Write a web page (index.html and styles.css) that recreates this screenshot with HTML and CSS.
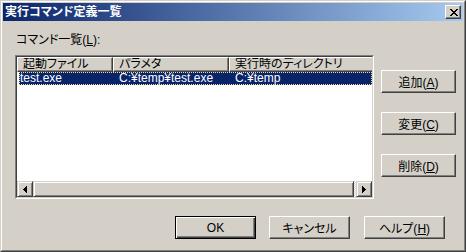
FILE: index.html
```html
<!DOCTYPE html>
<html lang="ja">
<head>
  <meta charset="UTF-8" />
  <title>実行コマンド定義一覧</title>
  <link rel="stylesheet" href="styles.css">
</head>
<body>
  <div class="window">
    <div class="frame">
      <div class="titlebar">
        <span class="title">実行コマンド定義一覧</span>
        <button class="close" type="button" title="閉じる">
          <svg width="8" height="7" viewBox="0 0 8 7" shape-rendering="crispEdges">
            <path fill="#000" d="M0 0h2v1H0zM6 0h2v1H6zM1 1h2v1H1zM5 1h2v1H5zM2 2h4v1H2zM3 3h2v1H3zM2 4h4v1H2zM1 5h2v1H1zM5 5h2v1H5zM0 6h2v1H0zM6 6h2v1H6z"/>
          </svg>
        </button>
      </div>

      <div class="body">
        <div class="main">
          <div class="list-col">
            <div class="caption">コマンド一覧(<u>L</u>):</div>
            <div class="listview">
              <div class="lv-inner">
                <div class="lv-view">
                  <div class="lv-header">
                    <div class="lv-head c1">起動ファイル</div>
                    <div class="lv-head c2">パラメタ</div>
                    <div class="lv-head c3">実行時のディレクトリ</div>
                  </div>
                  <div class="lv-row selected">
                    <span class="cell c1">test.exe</span>
                    <span class="cell c2">C:¥temp¥test.exe</span>
                    <span class="cell c3">C:¥temp</span>
                  </div>
                </div>
                <div class="hscroll">
                  <div class="sb-btn">
                    <svg width="4" height="7" viewBox="0 0 4 7" shape-rendering="crispEdges">
                      <path fill="#000" d="M3 0h1v7H3zM2 1h1v5H2zM1 2h1v3H1zM0 3h1v1H0z"/>
                    </svg>
                  </div>
                  <div class="sb-thumb"></div>
                  <div class="sb-track"></div>
                  <div class="sb-btn">
                    <svg width="4" height="7" viewBox="0 0 4 7" shape-rendering="crispEdges">
                      <path fill="#000" d="M0 0h1v7H0zM1 1h1v5H1zM2 2h1v3H2zM3 3h1v1H3z"/>
                    </svg>
                  </div>
                </div>
              </div>
            </div>
          </div>

          <div class="side">
            <button class="btn" type="button">追加(<u>A</u>)</button>
            <button class="btn" type="button">変更(<u>C</u>)</button>
            <button class="btn" type="button">削除(<u>D</u>)</button>
          </div>
        </div>

        <div class="footer">
          <button class="btn wide default" type="button">OK</button>
          <button class="btn wide" type="button">キャンセル</button>
          <button class="btn wide help" type="button">ヘルプ(<u>H</u>)</button>
        </div>
      </div>
    </div>
  </div>
</body>
</html>
```

FILE: styles.css
```css
html, body {
  margin: 0;
  padding: 0;
}
body {
  width: 466px;
  height: 252px;
  background: #d4d0c8;
  color: #000;
  font-family: "Liberation Sans", "Noto Sans CJK JP", sans-serif;
  font-size: 12px;
  font-feature-settings: "palt";
}
u {
  text-decoration: underline;
  text-underline-offset: 1px;
}

/* window frame */
.window {
  box-sizing: border-box;
  width: 466px;
  height: 252px;
  border: 1px solid;
  border-color: #d4d0c8 #404040 #404040 #d4d0c8;
}
.frame {
  box-sizing: border-box;
  height: 100%;
  border: 1px solid;
  border-color: #fff #808080 #808080 #fff;
  padding: 1px;
  display: flex;
  flex-direction: column;
}
.titlebar {
  height: 18px;
  display: flex;
  align-items: center;
  justify-content: space-between;
  padding: 0 2px;
  background: linear-gradient(to right, #0a246a, #a6caf0);
  color: #fff;
  font-weight: bold;
}
.title {
  line-height: 18px;
  white-space: nowrap;
}
.close {
  box-sizing: border-box;
  width: 16px;
  height: 14px;
  padding: 0 0 0 2px;
  display: flex;
  align-items: center;
  justify-content: center;
  background: #d4d0c8;
  border: 1px solid;
  border-color: #fff #404040 #404040 #fff;
  box-shadow: inset -1px -1px #808080;
}

/* dialog body */
.body {
  flex: 1;
  padding: 12px 6px 0 12px;
  display: flex;
  flex-direction: column;
}
.main {
  display: flex;
}
.list-col {
  width: 359px;
}
.caption {
  height: 14px;
  line-height: 14px;
  margin: 0 0 8px 1px;
  white-space: nowrap;
}

/* list view */
.listview {
  box-sizing: border-box;
  height: 144px;
  border: 1px solid;
  border-color: #808080 #fff #fff #808080;
}
.lv-inner {
  box-sizing: border-box;
  height: 100%;
  border: 1px solid;
  border-color: #404040 #d4d0c8 #d4d0c8 #404040;
  display: flex;
  flex-direction: column;
}
.lv-view {
  flex: 1;
  background: #fff;
  overflow: hidden;
}
.lv-header {
  display: flex;
  height: 15px;
}
.lv-head {
  flex: none;
  box-sizing: border-box;
  height: 15px;
  line-height: 13px;
  padding-left: 5px;
  background: #d4d0c8;
  border: 1px solid;
  border-color: #fff #404040 #404040 #fff;
  box-shadow: inset -1px -1px #808080;
  white-space: nowrap;
  overflow: hidden;
}
.lv-head.c1 { width: 96px; }
.lv-head.c2 { width: 116px; }
.lv-head.c3 { width: 170px; }

.lv-row {
  display: flex;
  height: 13px;
  line-height: 13px;
  margin-left: 2px;
  white-space: nowrap;
}
.lv-row.selected {
  background: #0a246a;
  color: #fff;
  outline: 1px dotted #f5db95;
  outline-offset: -1px;
}
.cell {
  flex: none;
  box-sizing: border-box;
  padding-left: 6px;
}
.cell.c1 { width: 94px; padding-left: 1px; }
.cell.c2 { width: 116px; }
.cell.c3 { flex: 1; }

/* horizontal scroll bar */
.hscroll {
  height: 16px;
  display: flex;
}
.sb-btn,
.sb-thumb {
  box-sizing: border-box;
  height: 16px;
  background: #d4d0c8;
  border: 1px solid;
  border-color: #d4d0c8 #404040 #404040 #d4d0c8;
  box-shadow: inset 1px 1px #fff, inset -1px -1px #808080;
}
.sb-btn {
  width: 16px;
  display: flex;
  align-items: center;
  justify-content: center;
}
.sb-thumb {
  flex: 1;
}
.sb-track {
  width: 2px;
  background: repeating-conic-gradient(#fff 0 25%, #d4d0c8 0 50%) 0 0 / 2px 2px;
}

/* buttons */
.btn {
  box-sizing: border-box;
  width: 75px;
  height: 23px;
  padding: 0;
  font: inherit;
  color: #000;
  background: #d4d0c8;
  border: 1px solid;
  border-color: #fff #404040 #404040 #fff;
  box-shadow: inset -1px -1px #808080;
  white-space: nowrap;
}
.btn.wide {
  width: 81px;
}
.btn.default {
  border-color: #000;
  box-shadow: inset 1px 1px #fff, inset -1px -1px #404040, inset -2px -2px #808080;
}
.side {
  margin-left: 7px;
  padding-top: 37px;
  display: flex;
  flex-direction: column;
  gap: 19px;
}
.footer {
  margin-top: 17px;
  padding-left: 160px;
  display: flex;
  gap: 13px;
}
.footer .help {
  margin-left: 1px;
}
```
